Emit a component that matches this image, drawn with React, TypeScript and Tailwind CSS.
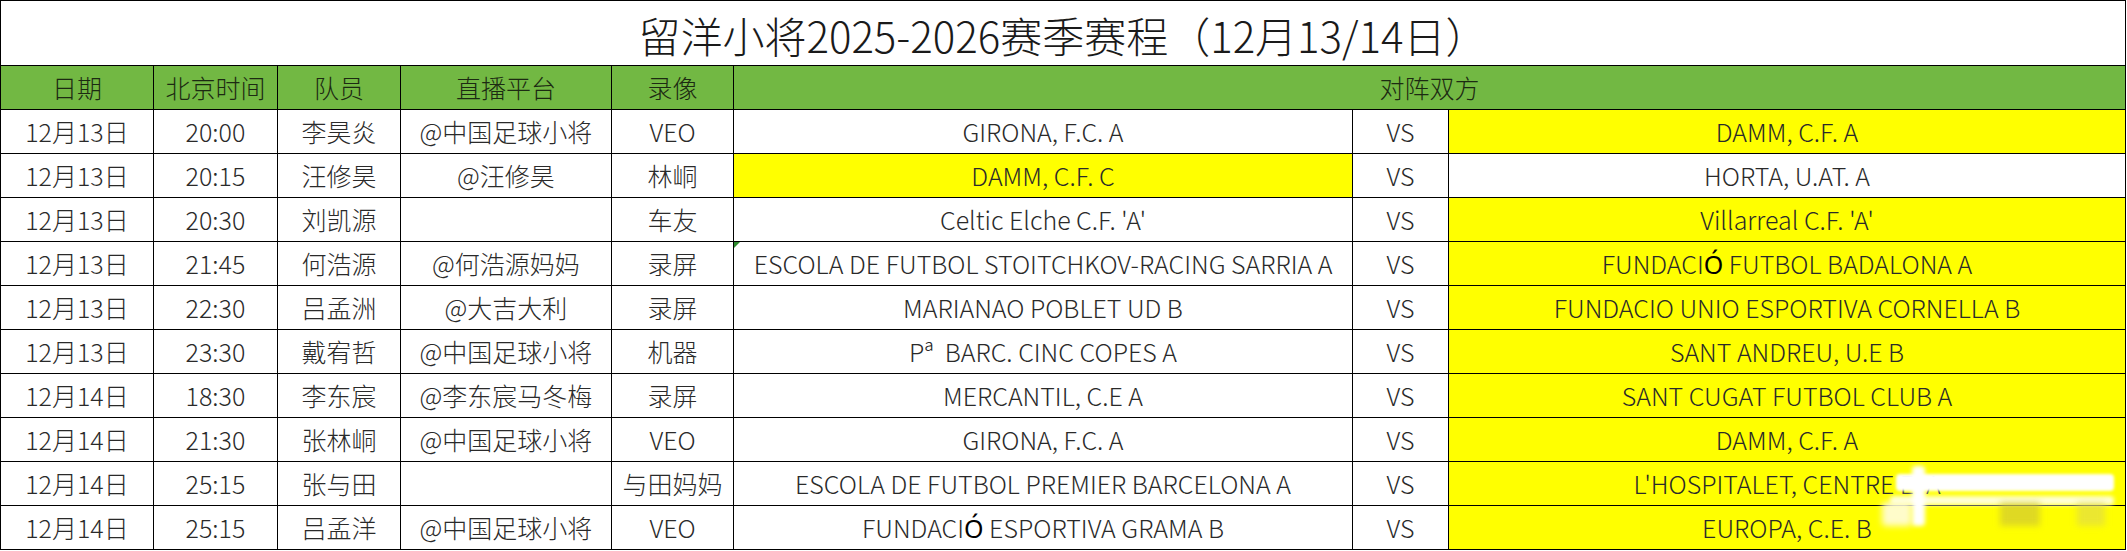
const Ocute = () => (
  <span className="font-['Noto_Sans',sans-serif] font-normal text-black">Ó</span>
);

const rows = [
  { date: '12月13日', time: '20:00', name: '李昊炎', live: '@中国足球小将', video: 'VEO', a: 'GIRONA, F.C. A', b: 'DAMM, C.F. A', ay: false, by: true },
  { date: '12月13日', time: '20:15', name: '汪修昊', live: '@汪修昊', video: '林峒', a: 'DAMM, C.F. C', b: 'HORTA, U.AT. A', ay: true, by: false },
  { date: '12月13日', time: '20:30', name: '刘凯源', live: '', video: '车友', a: "Celtic Elche C.F. 'A'", b: "Villarreal C.F. 'A'", ay: false, by: true },
  {
    date: '12月13日', time: '21:45', name: '何浩源', live: '@何浩源妈妈', video: '录屏',
    a: 'ESCOLA DE FUTBOL STOITCHKOV-RACING SARRIA A',
    b: <>FUNDACI<Ocute /> FUTBOL BADALONA A</>,
    ay: false, by: true, mark: true,
  },
  { date: '12月13日', time: '22:30', name: '吕孟洲', live: '@大吉大利', video: '录屏', a: 'MARIANAO POBLET UD B', b: 'FUNDACIO UNIO ESPORTIVA CORNELLA B', ay: false, by: true },
  {
    date: '12月13日', time: '23:30', name: '戴宥哲', live: '@中国足球小将', video: '机器',
    a: <>Pª&nbsp; BARC. CINC COPES A</>,
    b: 'SANT ANDREU, U.E B', ay: false, by: true,
  },
  { date: '12月14日', time: '18:30', name: '李东宸', live: '@李东宸马冬梅', video: '录屏', a: 'MERCANTIL, C.E A', b: 'SANT CUGAT FUTBOL CLUB A', ay: false, by: true },
  { date: '12月14日', time: '21:30', name: '张林峒', live: '@中国足球小将', video: 'VEO', a: 'GIRONA, F.C. A', b: 'DAMM, C.F. A', ay: false, by: true },
  { date: '12月14日', time: '25:15', name: '张与田', live: '', video: '与田妈妈', a: 'ESCOLA DE FUTBOL PREMIER BARCELONA A', b: "L'HOSPITALET, CENTRE E. A", ay: false, by: true },
  {
    date: '12月14日', time: '25:15', name: '吕孟洋', live: '@中国足球小将', video: 'VEO',
    a: <>FUNDACI<Ocute /> ESPORTIVA GRAMA B</>,
    b: 'EUROPA, C.E. B', ay: false, by: true,
  },
];

const cell = 'border border-black text-center align-middle whitespace-nowrap p-0 leading-none';

export default function App() {
  return (
    <div className="w-[2127px] h-[551px] bg-white overflow-hidden relative font-['Liberation_Sans_Narrow','Noto_Sans_CJK_SC',sans-serif] text-[25px] leading-none text-[#2a2a2a] font-light">
      <table className="table-fixed border-collapse w-[2125px]">
        <colgroup>
          <col className="w-[153px]" />
          <col className="w-[124px]" />
          <col className="w-[123px]" />
          <col className="w-[211px]" />
          <col className="w-[122px]" />
          <col className="w-[619px]" />
          <col className="w-[96px]" />
          <col className="w-[677px]" />
        </colgroup>
        <tbody>
          {/* 标题 */}
          <tr className="h-[65px]">
            <td colSpan={8} className={`${cell} text-[42px] text-[#1a1a1a] pt-1`}>
              留洋小将2025-2026赛季赛程（12月13/14日）
            </td>
          </tr>

          {/* 表头 */}
          <tr className="h-[44px] bg-[#72b843] text-[#1c2a12]">
            {['日期', '北京时间', '队员', '直播平台', '录像'].map((h) => (
              <td key={h} className={cell}>{h}</td>
            ))}
            <td colSpan={3} className={cell}>对阵双方</td>
          </tr>

          {rows.map((r, i) => (
            <tr key={i} className="h-[44px]">
              <td className={cell}>{r.date}</td>
              <td className={cell}>{r.time}</td>
              <td className={cell}>{r.name}</td>
              <td className={cell}>{r.live}</td>
              <td className={cell}>{r.video}</td>
              <td className={`${cell} relative ${r.ay ? 'bg-[#ffff00]' : ''}`}>
                {r.mark && (
                  <span className="absolute left-0 top-0 w-0 h-0 border-t-[6px] border-t-[#2e8b2e] border-r-[6px] border-r-transparent" />
                )}
                {r.a}
              </td>
              <td className={cell}>VS</td>
              <td className={`${cell} ${r.by ? 'bg-[#ffff00]' : ''}`}>{r.b}</td>
            </tr>
          ))}
        </tbody>
      </table>

      {/* 水印 */}
      <div className="absolute left-[1872px] top-[466px] w-[245px] h-[62px] pointer-events-none">
        <div className="absolute left-[24px] top-[8px] w-[218px] h-[17px] bg-white blur-[1.5px] rounded" />
        <div className="absolute left-[18px] top-[30px] w-[224px] h-[9px] bg-white/85 blur-[2px] rounded" />
        <div className="absolute left-[40px] top-0 w-[13px] h-[60px] bg-white blur-[2px] rounded" />
        <div className="absolute left-[10px] top-[36px] w-[30px] h-[24px] bg-[#fffce0]/90 blur-[3px] rounded" />
        <div className="absolute left-[128px] top-[36px] w-[40px] h-[24px] bg-[#c9c03a]/60 blur-[3px]" />
        <div className="absolute left-[205px] top-[36px] w-[28px] h-[24px] bg-[#d8d060]/50 blur-[3px]" />
      </div>
    </div>
  );
}
